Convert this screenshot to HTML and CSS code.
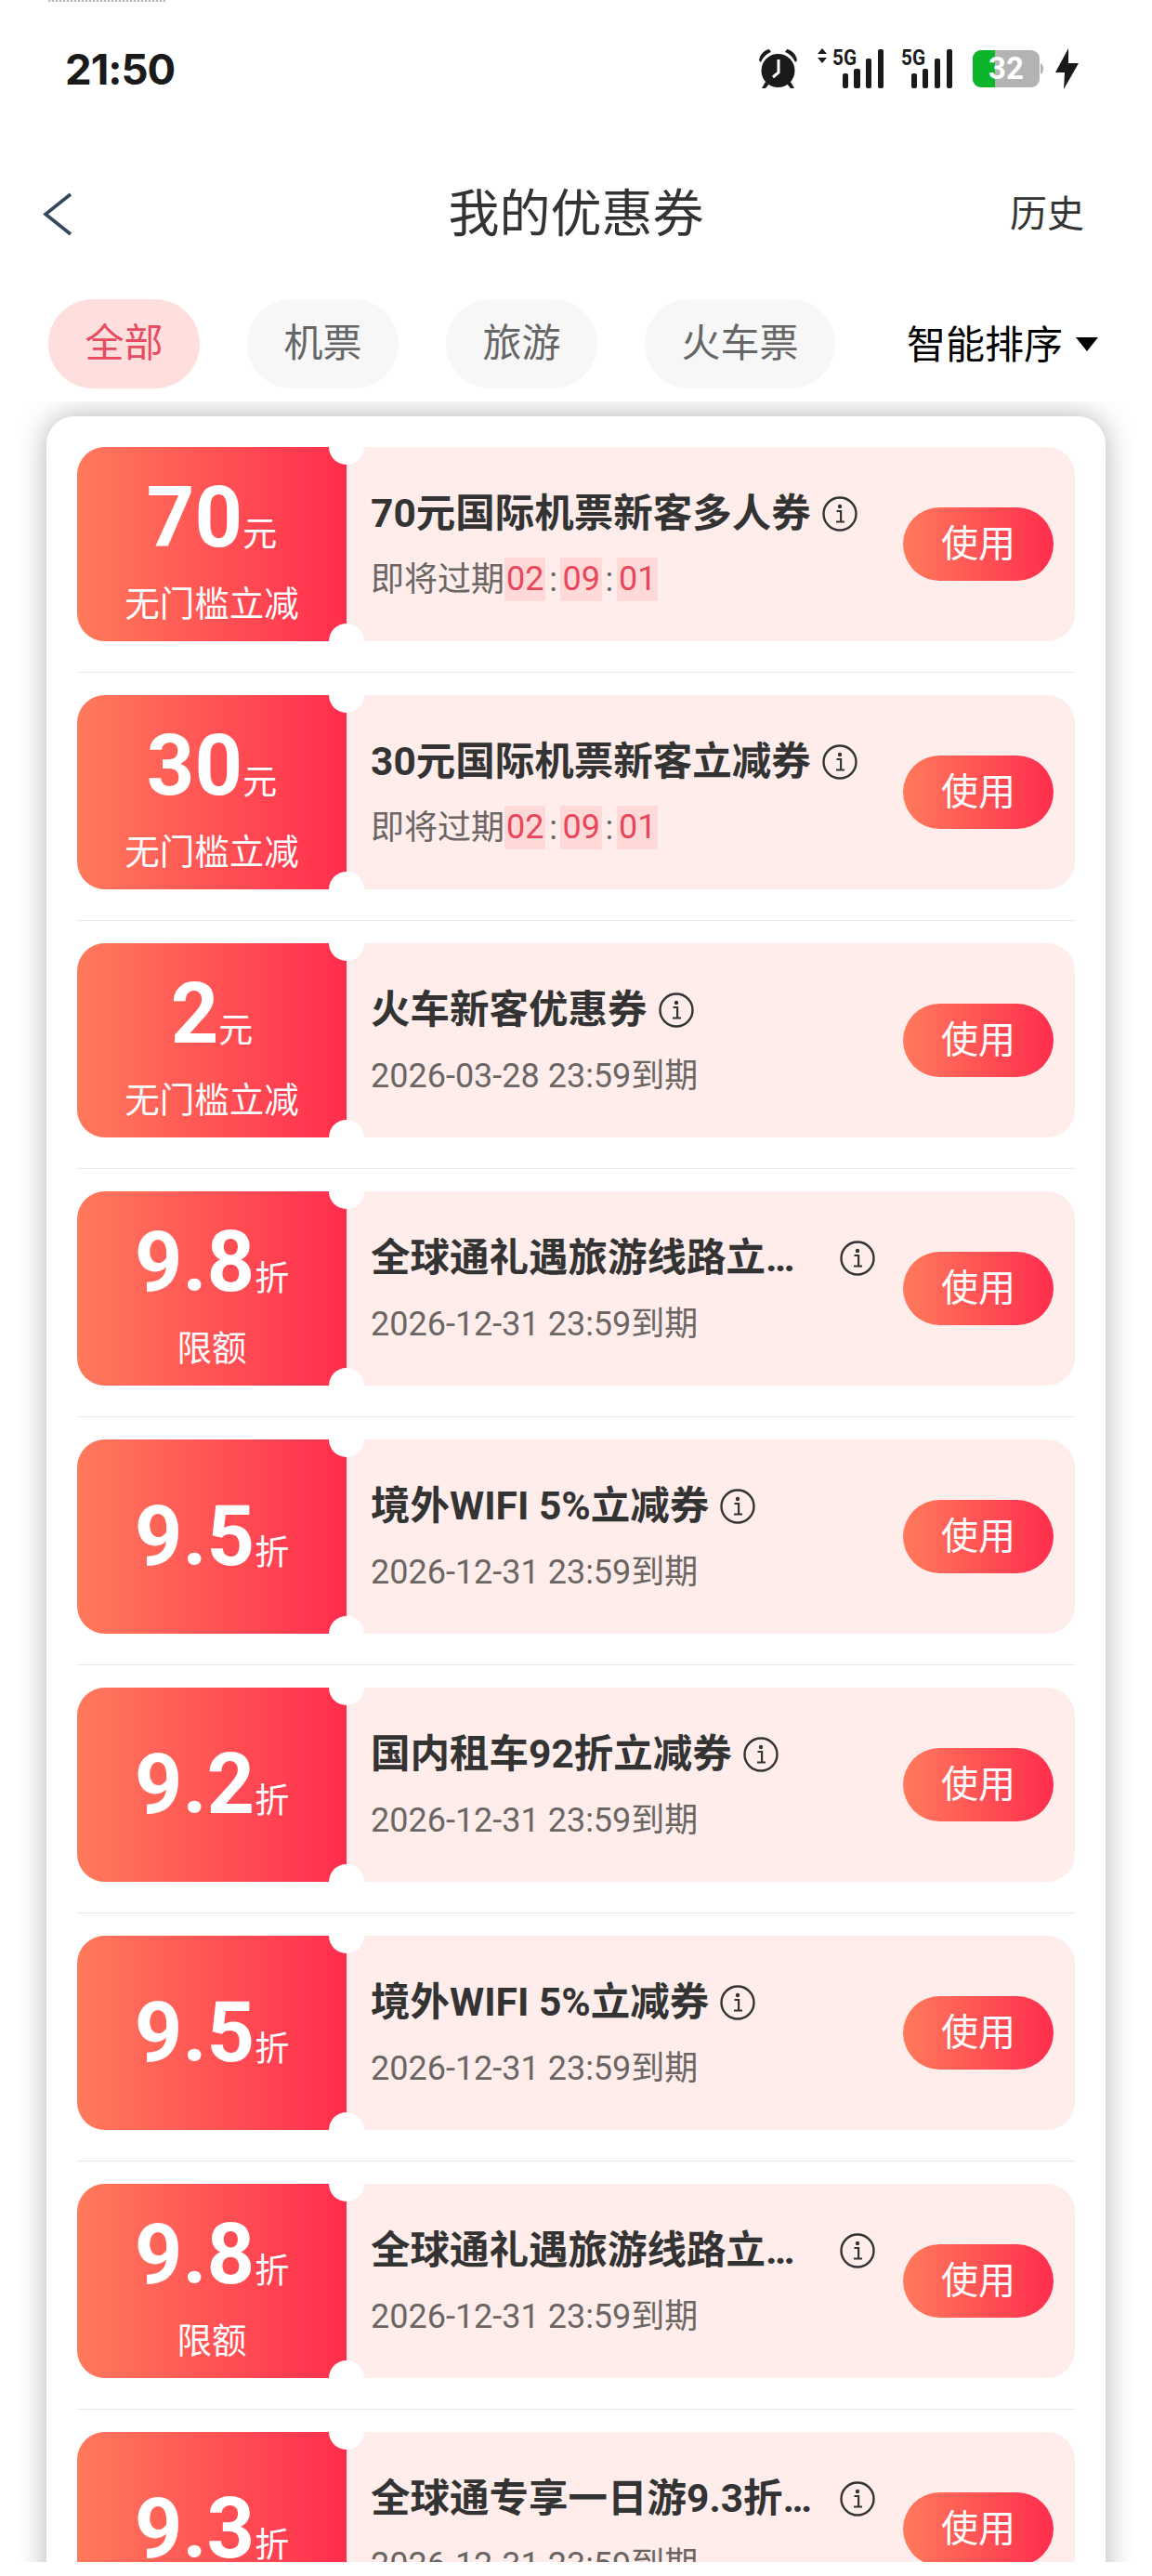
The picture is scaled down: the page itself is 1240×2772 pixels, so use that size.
FILE: index.html
```html
<!DOCTYPE html>
<html lang="zh-CN">
<head>
<meta charset="utf-8">
<title>我的优惠券</title>
<link rel="stylesheet" href="styles.css">
</head>
<body>
<svg class="defs" width="0" height="0" aria-hidden="true">
  <symbol id="info" viewBox="0 0 38 38">
    <circle cx="19" cy="19" r="17.5" fill="none" stroke="#333" stroke-width="2.4"/>
    <circle cx="19" cy="11" r="2.2" fill="#333"/>
    <path d="M15.5 16h4.6v11.5M15 27.5h9" fill="none" stroke="#333" stroke-width="2.2"/>
  </symbol>
</svg>
<div class="page">
  <div class="smudge"></div>
  <div class="status">
    <span class="time">21:50</span>
    <div class="status-icons">
      <svg class="ic-alarm" width="43" height="44" viewBox="0 0 43 44">
        <path d="M1 13C2 7 6 2 12 1l2 3C9 6 5 10 3 15zM42 13C41 7 37 2 31 1l-2 3c5 2 9 6 11 11z" fill="#1a1a1a"/>
        <circle cx="21.500" cy="24" r="18" fill="#1a1a1a"/>
        <path d="M8 36l-4 7h4l4-5zM35 36l4 7h-4l-4-5z" fill="#1a1a1a"/>
        <path d="M22 12v14l-6 5" fill="none" stroke="#fff" stroke-width="3"/>
      </svg>
      <svg class="ic-sig1" width="71" height="56" viewBox="0 -6 71 56">
        <path d="M0 6l5-6 5 6zM0 10l5 6 5-6z" fill="#1a1a1a"/>
        <text x="16" y="18" class="net" textLength="26" lengthAdjust="spacingAndGlyphs">5G</text>
        <rect x="27" y="27" width="6" height="16" rx="2" fill="#1a1a1a"/>
        <rect x="39" y="22" width="7" height="21" rx="2" fill="#1a1a1a"/>
        <rect x="52" y="11" width="6" height="32" rx="2" fill="#1a1a1a"/>
        <rect x="65" y="1" width="6" height="42" rx="2" fill="#1a1a1a"/>
      </svg>
      <svg class="ic-sig2" width="55" height="56" viewBox="0 -6 55 56">
        <text x="0" y="18" class="net" textLength="26" lengthAdjust="spacingAndGlyphs">5G</text>
        <rect x="11" y="27" width="6" height="16" rx="2" fill="#1a1a1a"/>
        <rect x="23" y="22" width="6" height="21" rx="2" fill="#1a1a1a"/>
        <rect x="36" y="11" width="6" height="32" rx="2" fill="#1a1a1a"/>
        <rect x="49" y="1" width="6" height="42" rx="2" fill="#1a1a1a"/>
      </svg>
      <svg class="ic-batt" width="76" height="40" viewBox="0 0 76 40">
        <rect x="0" y="0" width="72" height="40" rx="9" fill="#b3b3b3"/>
        <path d="M9 0h15v40H9a9 9 0 0 1-9-9V9a9 9 0 0 1 9-9z" fill="#0cb52a"/>
        <path d="M73 14c2 1 3 3 3 6s-1 5-3 6z" fill="#b3b3b3"/>
        <text x="36" y="31" class="batt" text-anchor="middle">32</text>
      </svg>
      <svg class="ic-bolt" width="25" height="44" viewBox="0 0 25 44">
        <path d="M14 0L0 26h10L9 44 25 16H14z" fill="#1a1a1a"/>
      </svg>
    </div>
  </div>

  <div class="nav">
    <svg class="back" width="34" height="49" viewBox="0 0 34 49">
      <path d="M31 3L4 24.500 31 46" fill="none" stroke="#34495e" stroke-width="3.600"/>
    </svg>
    <h1 class="nav-title">我的优惠券</h1>
    <span class="nav-link">历史</span>
  </div>

  <div class="tabs">
    <span class="tab tab-on">全部</span>
    <span class="tab">机票</span>
    <span class="tab">旅游</span>
    <span class="tab">火车票</span>
    <span class="sort">智能排序<i class="caret"></i></span>
  </div>

  <div class="clip">
    <div class="card">

      <div class="ticket">
        <div class="t-left">
          <div class="value"><b>70</b><span>元</span></div>
          <div class="cond">无门槛立减</div>
        </div>
        <div class="t-right">
          <div class="info">
            <div class="name"><span class="name-text">70元国际机票新客多人券</span><svg class="i"><use href="#info"/></svg></div>
            <div class="date">即将过期<span class="cd">02</span><span class="sep">:</span><span class="cd">09</span><span class="sep">:</span><span class="cd">01</span></div>
          </div>
          <span class="use">使用</span>
        </div>
      </div>
      <hr class="rule">

      <div class="ticket">
        <div class="t-left">
          <div class="value"><b>30</b><span>元</span></div>
          <div class="cond">无门槛立减</div>
        </div>
        <div class="t-right">
          <div class="info">
            <div class="name"><span class="name-text">30元国际机票新客立减券</span><svg class="i"><use href="#info"/></svg></div>
            <div class="date">即将过期<span class="cd">02</span><span class="sep">:</span><span class="cd">09</span><span class="sep">:</span><span class="cd">01</span></div>
          </div>
          <span class="use">使用</span>
        </div>
      </div>
      <hr class="rule">

      <div class="ticket">
        <div class="t-left">
          <div class="value"><b>2</b><span>元</span></div>
          <div class="cond">无门槛立减</div>
        </div>
        <div class="t-right">
          <div class="info">
            <div class="name"><span class="name-text">火车新客优惠券</span><svg class="i"><use href="#info"/></svg></div>
            <div class="date">2026-03-28 23:59到期</div>
          </div>
          <span class="use">使用</span>
        </div>
      </div>
      <hr class="rule">

      <div class="ticket">
        <div class="t-left">
          <div class="value"><b>9.8</b><span>折</span></div>
          <div class="cond">限额</div>
        </div>
        <div class="t-right">
          <div class="info">
            <div class="name"><span class="name-text">全球通礼遇旅游线路立减券</span><svg class="i"><use href="#info"/></svg></div>
            <div class="date">2026-12-31 23:59到期</div>
          </div>
          <span class="use">使用</span>
        </div>
      </div>
      <hr class="rule">

      <div class="ticket">
        <div class="t-left">
          <div class="value"><b>9.5</b><span>折</span></div>
        </div>
        <div class="t-right">
          <div class="info">
            <div class="name"><span class="name-text">境外WIFI 5%立减券</span><svg class="i"><use href="#info"/></svg></div>
            <div class="date">2026-12-31 23:59到期</div>
          </div>
          <span class="use">使用</span>
        </div>
      </div>
      <hr class="rule">

      <div class="ticket">
        <div class="t-left">
          <div class="value"><b>9.2</b><span>折</span></div>
        </div>
        <div class="t-right">
          <div class="info">
            <div class="name"><span class="name-text">国内租车92折立减券</span><svg class="i"><use href="#info"/></svg></div>
            <div class="date">2026-12-31 23:59到期</div>
          </div>
          <span class="use">使用</span>
        </div>
      </div>
      <hr class="rule">

      <div class="ticket">
        <div class="t-left">
          <div class="value"><b>9.5</b><span>折</span></div>
        </div>
        <div class="t-right">
          <div class="info">
            <div class="name"><span class="name-text">境外WIFI 5%立减券</span><svg class="i"><use href="#info"/></svg></div>
            <div class="date">2026-12-31 23:59到期</div>
          </div>
          <span class="use">使用</span>
        </div>
      </div>
      <hr class="rule">

      <div class="ticket">
        <div class="t-left">
          <div class="value"><b>9.8</b><span>折</span></div>
          <div class="cond">限额</div>
        </div>
        <div class="t-right">
          <div class="info">
            <div class="name"><span class="name-text">全球通礼遇旅游线路立减券</span><svg class="i"><use href="#info"/></svg></div>
            <div class="date">2026-12-31 23:59到期</div>
          </div>
          <span class="use">使用</span>
        </div>
      </div>
      <hr class="rule">

      <div class="ticket">
        <div class="t-left">
          <div class="value"><b>9.3</b><span>折</span></div>
        </div>
        <div class="t-right">
          <div class="info">
            <div class="name"><span class="name-text">全球通专享一日游9.3折优惠券</span><svg class="i"><use href="#info"/></svg></div>
            <div class="date">2026-12-31 23:59到期</div>
          </div>
          <span class="use">使用</span>
        </div>
      </div>

    </div>
  </div>
</div>
</body>
</html>
```

FILE: styles.css
```css
* { box-sizing: border-box; }
html, body { margin: 0; padding: 0; background: #fff; }
body { font-family: Roboto, "Noto Sans CJK SC", sans-serif; color: #333; }
.defs { position: absolute; }
.page { width: 1240px; height: 2772px; overflow: hidden; background: #fff; position: relative; }

.smudge {
  position: absolute; left: 52px; top: 0; width: 126px; height: 2px;
  background: repeating-linear-gradient(90deg, #bbb 0 2px, #eee 2px 4px);
}

.status { height: 148px; display: flex; align-items: center; justify-content: space-between; padding: 0 79px 0 70px; }
.time { font-family: Inter, sans-serif; font-weight: 700; font-size: 45.5px; letter-spacing: -1px; color: #1a1a1a; }
.status-icons { display: flex; align-items: center; }
.ic-sig1 { margin-left: 21px; }
.ic-sig2 { margin-left: 19px; }
.ic-batt { margin-left: 22px; }
.ic-bolt { margin-left: 13px; }
.net { font-family: Roboto, sans-serif; font-weight: 700; font-size: 24px; fill: #1a1a1a; }
.batt { font-family: Roboto, sans-serif; font-weight: 700; font-size: 33px; fill: #fff; }

.nav { height: 164px; display: flex; align-items: center; justify-content: space-between; padding: 0 73px 0 45px; position: relative; }
.back { display: block; }
.nav-title {
  position: absolute; left: 0; right: 0; text-align: center; margin: 0;
  font-size: 55px; font-weight: 400; color: #333; line-height: 1.2;
}
.nav-link { font-size: 40px; color: #333; padding-bottom: 6px; }

.tabs { margin-top: 10px; height: 96px; display: flex; align-items: center; gap: 51px; padding: 0 58px 0 52px; }
.tab { height: 96px; padding: 0 39.5px; border-radius: 48px; background: #f7f7f7; color: #666; font-size: 42px; line-height: 96px; }
.tab-on { background: #ffdfdd; color: #e84a5f; }
.sort { margin-left: auto; display: flex; align-items: center; font-size: 42px; color: #000; padding-bottom: 6px; }
.caret { margin: 6px 0 0 14px; width: 0; height: 0; border-left: 12px solid transparent; border-right: 12px solid transparent; border-top: 15px solid #000; }

.clip { margin-top: 14px; height: 2325px; overflow: hidden; padding: 16px 50px 0; }
.card { background: #fff; border-radius: 30px; padding: 33px 33px 40px; box-shadow: 0 0 32px rgba(0,0,0,.3); }

.ticket { display: flex; height: 209px; border-radius: 30px; overflow: hidden; position: relative; background: #feedeb; }
.ticket::before, .ticket::after {
  content: ""; position: absolute; left: 271px; width: 38px; height: 38px; border-radius: 50%; background: #fff;
}
.ticket::before { top: -19px; }
.ticket::after { bottom: -19px; }

.t-left {
  width: 290px; flex: none; color: #fff; display: flex; flex-direction: column; align-items: center; justify-content: center;
  background: linear-gradient(90deg, #ff7a5c, #ff2d4d);
}
.value { display: flex; align-items: baseline; line-height: 96px; padding-top: 18px; }
.value b { font-size: 90px; font-weight: 700; }
.value span { font-size: 37px; }
.cond { font-size: 37.5px; line-height: 52px; padding-bottom: 4px; }

.t-right { flex: 1; min-width: 0; display: flex; align-items: center; justify-content: space-between; padding: 0 23px 0 26px; }
.info { display: flex; flex-direction: column; gap: 16px; min-width: 0; }
.name { display: flex; align-items: center; height: 60px; }
.name-text { max-width: 493px; white-space: nowrap; overflow: hidden; text-overflow: ellipsis; font-size: 42.5px; font-weight: 700; line-height: 60px; color: #333; }
.i { width: 38px; height: 38px; flex: none; margin-left: 12px; }
.date { font-size: 36px; line-height: 50px; color: #6b6564; display: flex; align-items: center; }
.cd { background: #ffd9d8; color: #e8465a; padding: 0 2px; border-radius: 2px; height: 47px; line-height: 47px; }
.sep { width: 16px; text-align: center; }

.use { flex: none; width: 162px; height: 79px; border-radius: 40px; color: #fff; font-size: 40px; line-height: 79px; text-align: center; background: linear-gradient(90deg, #ff7a5c, #ff2d4d); }

.rule { border: 0; border-top: 1px solid #e6e6e6; margin: 33px 0 24px; }
```
